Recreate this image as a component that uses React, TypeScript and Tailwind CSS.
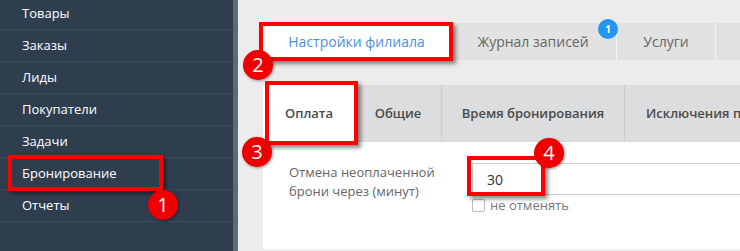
import React from "react";

const menu = ["Товары", "Заказы", "Лиды", "Покупатели", "Задачи", "Бронирование", "Отчеты"];

function Marker({ n, className }: { n: number; className: string }) {
  return (
    <div
      className={
        "absolute w-[30px] h-[30px] rounded-full bg-[#ee0000] text-white text-[20px] leading-[30px] text-center shadow-[1px_1px_3px_rgba(0,0,0,0.4)] " +
        className
      }
    >
      {n}
    </div>
  );
}

export default function App() {
  return (
    <div
      className="relative w-[740px] h-[251px] flex overflow-hidden bg-[#ececec]"
      style={{ fontFamily: '"Open Sans", "Noto Sans", sans-serif' }}
    >
      <aside className="w-[238px] shrink-0 bg-[#2f3e4f] border-r-[5px] border-[#5b6b7c] -mt-[2px]">
        {menu.map((m) => (
          <div
            key={m}
            className="h-[32px] border-b border-[#3a4a5b] pl-[22px] flex items-center text-[13px] text-white"
          >
            {m}
          </div>
        ))}
      </aside>

      <main className="flex-1 pl-[25px] flex flex-col">
        <div className="mt-[23px] h-[37px] flex bg-[#e2e2e2] text-[14px]">
          <div className="w-[187px] bg-white text-[#4a90d9] flex items-center justify-center">
            Настройки филиала
          </div>
          <div className="w-[167px] text-[#666] flex items-center justify-center border-r border-[#f4f4f4]">
            Журнал записей
          </div>
          <div className="w-[99px] text-[#666] flex items-center justify-center border-r border-[#f4f4f4]">
            Услуги
          </div>
          <div className="flex-1" />
        </div>

        <div className="mt-[25px] h-[57px] flex bg-[#dcdddf] text-[13px] font-semibold text-[#4a4a4a]">
          <div className="w-[92px] bg-white flex items-center justify-center">Оплата</div>
          <div className="w-[87px] flex items-center justify-center border-r border-[#cbcccf]">
            Общие
          </div>
          <div className="w-[183px] flex items-center justify-center border-r border-[#cbcccf]">
            Время бронирования
          </div>
          <div className="flex-1 pl-[21px] flex items-center whitespace-nowrap overflow-hidden">
            Исключения по дням
          </div>
        </div>

        <div className="h-[107px] bg-white flex pt-[21px]">
          <div className="w-[209px] pl-[26px] text-[13px] leading-[19px] text-[#666]">
            Отмена неоплаченной
            <br />
            брони через (минут)
          </div>
          <div className="flex-1 flex flex-col">
            <div className="h-[32px] border border-r-0 border-[#cccccc] pl-[14px] flex items-center text-[14px] text-[#333]">
              30
            </div>
            <label className="flex items-center gap-[5px] mt-[3px] text-[13px] leading-[14px] text-[#777]">
              <span className="w-[13px] h-[13px] border border-[#bbb] rounded-[2px] bg-white" />
              не отменять
            </label>
          </div>
        </div>
      </main>

      {/* annotations */}
      <div className="absolute left-[8px] top-[155px] w-[155px] h-[36px] border-[4px] border-[#ff0000] shadow-[3px_3px_4px_rgba(0,0,0,0.45)]" />
      <div className="absolute left-[259px] top-[22px] w-[194px] h-[39px] border-[4px] border-[#ff0000] shadow-[3px_3px_4px_rgba(0,0,0,0.45)]" />
      <div className="absolute left-[265px] top-[81px] w-[93px] h-[64px] border-[4px] border-[#ff0000] shadow-[3px_3px_4px_rgba(0,0,0,0.45)]" />
      <div className="absolute left-[467px] top-[156px] w-[78px] h-[40px] border-[4px] border-[#ff0000] shadow-[3px_3px_4px_rgba(0,0,0,0.45)]" />

      <div className="absolute left-[598px] top-[19px] w-[20px] h-[20px] rounded-full bg-[#2196f3] text-white text-[10px] font-bold leading-[20px] text-center">
        1
      </div>

      <Marker n={1} className="left-[148px] top-[190px]" />
      <Marker n={2} className="left-[243px] top-[50px]" />
      <Marker n={3} className="left-[242px] top-[137px]" />
      <Marker n={4} className="left-[534px] top-[138px]" />
    </div>
  );
}
